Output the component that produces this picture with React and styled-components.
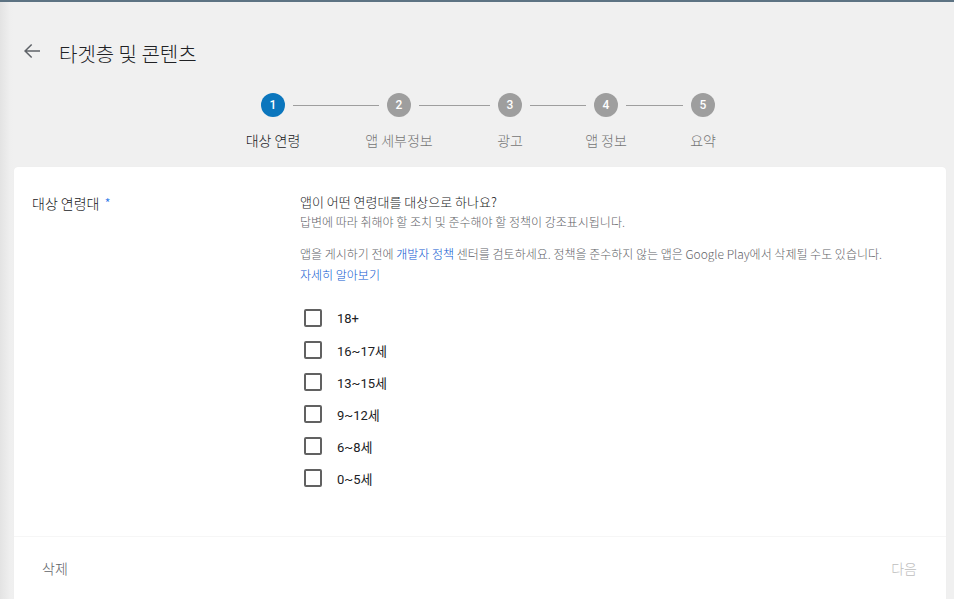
import React from "react";
import styled, { createGlobalStyle } from "styled-components";

const GlobalStyle = createGlobalStyle`
  html, body {
    margin: 0;
    height: 100%;
  }
  body {
    font-family: "Noto Sans CJK KR", "Noto Sans", Roboto, sans-serif;
    font-weight: 300;
    color: #202124;
    background: linear-gradient(to right, #e3e3e3 0, #efefef 10px, #f0f0f0 14px);
    border-top: 2px solid #5d7383;
    box-sizing: border-box;
    overflow: hidden;
  }
  #root {
    height: 100%;
  }
`;

const Page = styled.div`
  display: flex;
  flex-direction: column;
  height: 100%;
  padding: 0 8px 0 14px;
  box-sizing: border-box;
`;

const Header = styled.header`
  display: flex;
  align-items: center;
  gap: 15px;
  padding: 37px 0 0 6px;
  height: 30px;
`;

const BackButton = styled.button`
  display: flex;
  align-items: center;
  justify-content: center;
  width: 24px;
  height: 24px;
  margin-top: -6px;
  padding: 0;
  border: none;
  background: none;
  color: #5f6368;
  cursor: pointer;
`;

const Title = styled.h1`
  margin: 0;
  font-size: 20px;
  font-weight: 300;
  line-height: 30px;
  color: #202124;
`;

const Stepper = styled.ol`
  display: flex;
  align-items: flex-start;
  list-style: none;
  margin: 0;
  padding: 24px 0 0 247px;
  box-sizing: border-box;
  height: 98px;
`;

const Step = styled.li`
  display: flex;
  flex-direction: column;
  align-items: center;
  width: 24px;
`;

const Dot = styled.span`
  display: flex;
  align-items: center;
  justify-content: center;
  width: 24px;
  height: 24px;
  border-radius: 50%;
  background: ${(p) => (p.$active ? "#0b76bd" : "#9e9e9e")};
  color: #fff;
  font-family: Roboto, "Noto Sans", sans-serif;
  font-size: 12px;
  font-weight: 500;
`;

const StepLabel = styled.span`
  margin-top: 13px;
  white-space: nowrap;
  font-size: 14px;
  line-height: 20px;
  color: ${(p) => (p.$active ? "#202124" : "#757575")};
`;

const Connector = styled.span`
  flex: none;
  width: ${(p) => p.$w}px;
  height: 1px;
  margin: 12px 8px 0;
  background: #9e9e9e;
`;

const Card = styled.section`
  flex: 1;
  display: flex;
  flex-direction: column;
  background: #fff;
  border-radius: 4px 4px 0 0;
  box-shadow: 0 0 1px rgba(0, 0, 0, 0.06);
`;

const Body = styled.div`
  flex: 1;
  display: grid;
  grid-template-columns: 268px 1fr;
  padding: 26px 16px 0 18px;
`;

const FieldLabel = styled.div`
  font-size: 14px;
  line-height: 20px;
  color: #202124;
`;

const Required = styled.span`
  margin-left: 5px;
  color: #1a73e8;
`;

const Question = styled.div`
  font-size: 13px;
  line-height: 18px;
  color: #202124;
`;

const Hint = styled.p`
  margin: ${(p) => p.$top || 0}px 0 0;
  font-size: 12px;
  line-height: 21px;
  color: #5f6368;
`;

const Link = styled.a`
  display: ${(p) => (p.$block ? "block" : "inline")};
  color: #0b57d0;
  text-decoration: none;
`;

const Options = styled.ul`
  list-style: none;
  margin: 17px 0 0;
  padding: 0 0 0 4px;
  display: flex;
  flex-direction: column;
`;

const Option = styled.li`
  display: flex;
  align-items: center;
  gap: 15px;
  height: 32px;
  font-family: Roboto, "Noto Sans CJK KR", sans-serif;
  font-size: 13px;
  font-weight: 400;
  color: #202124;
`;

const Box = styled.span`
  width: 18px;
  height: 18px;
  box-sizing: border-box;
  border: 2px solid #616161;
  border-radius: 2px;
`;

const Footer = styled.footer`
  display: flex;
  justify-content: space-between;
  align-items: center;
  height: 62px;
  padding: 0 29px 0 28px;
  border-top: 1px solid #f6f6f6;
`;

const FooterButton = styled.button`
  padding: 0;
  border: none;
  background: none;
  font-family: "Noto Sans CJK KR", sans-serif;
  font-weight: 300;
  font-size: 14px;
  color: ${(p) => (p.disabled ? "#bdbdbd" : "#5f6368")};
  cursor: ${(p) => (p.disabled ? "default" : "pointer")};
`;

const steps = [
  { n: 1, label: "대상 연령", line: 86 },
  { n: 2, label: "앱 세부정보", line: 71 },
  { n: 3, label: "광고", line: 56 },
  { n: 4, label: "앱 정보", line: 57 },
  { n: 5, label: "요약" },
];

const ages = ["18+", "16~17세", "13~15세", "9~12세", "6~8세", "0~5세"];

export default function App() {
  return (
    <>
      <GlobalStyle />
      <Page>
        <Header>
          <BackButton aria-label="뒤로">
            <svg width="24" height="24" viewBox="0 0 24 24" fill="currentColor">
              <path d="M20 11.25H6.9l5.3-5.3-1.06-1.06L4 12l7.14 7.11 1.06-1.06-5.3-5.3H20v-1.5z" />
            </svg>
          </BackButton>
          <Title>타겟층 및 콘텐츠</Title>
        </Header>

        <Stepper>
          {steps.map((s) => (
            <React.Fragment key={s.n}>
              <Step>
                <Dot $active={s.n === 1}>{s.n}</Dot>
                <StepLabel $active={s.n === 1}>{s.label}</StepLabel>
              </Step>
              {s.line && <Connector $w={s.line} />}
            </React.Fragment>
          ))}
        </Stepper>

        <Card>
          <Body>
            <FieldLabel>
              대상 연령대<Required>*</Required>
            </FieldLabel>
            <div>
              <Question>앱이 어떤 연령대를 대상으로 하나요?</Question>
              <Hint>답변에 따라 취해야 할 조치 및 준수해야 할 정책이 강조표시됩니다.</Hint>
              <Hint $top={11}>
                앱을 게시하기 전에 <Link href="#">개발자 정책</Link> 센터를 검토하세요. 정책을 준수하지 않는 앱은 Google Play에서 삭제될 수도 있습니다.
                <Link href="#" $block>자세히 알아보기</Link>
              </Hint>
              <Options>
                {ages.map((a) => (
                  <Option key={a}>
                    <Box />
                    {a}
                  </Option>
                ))}
              </Options>
            </div>
          </Body>
          <Footer>
            <FooterButton>삭제</FooterButton>
            <FooterButton disabled>다음</FooterButton>
          </Footer>
        </Card>
      </Page>
    </>
  );
}
